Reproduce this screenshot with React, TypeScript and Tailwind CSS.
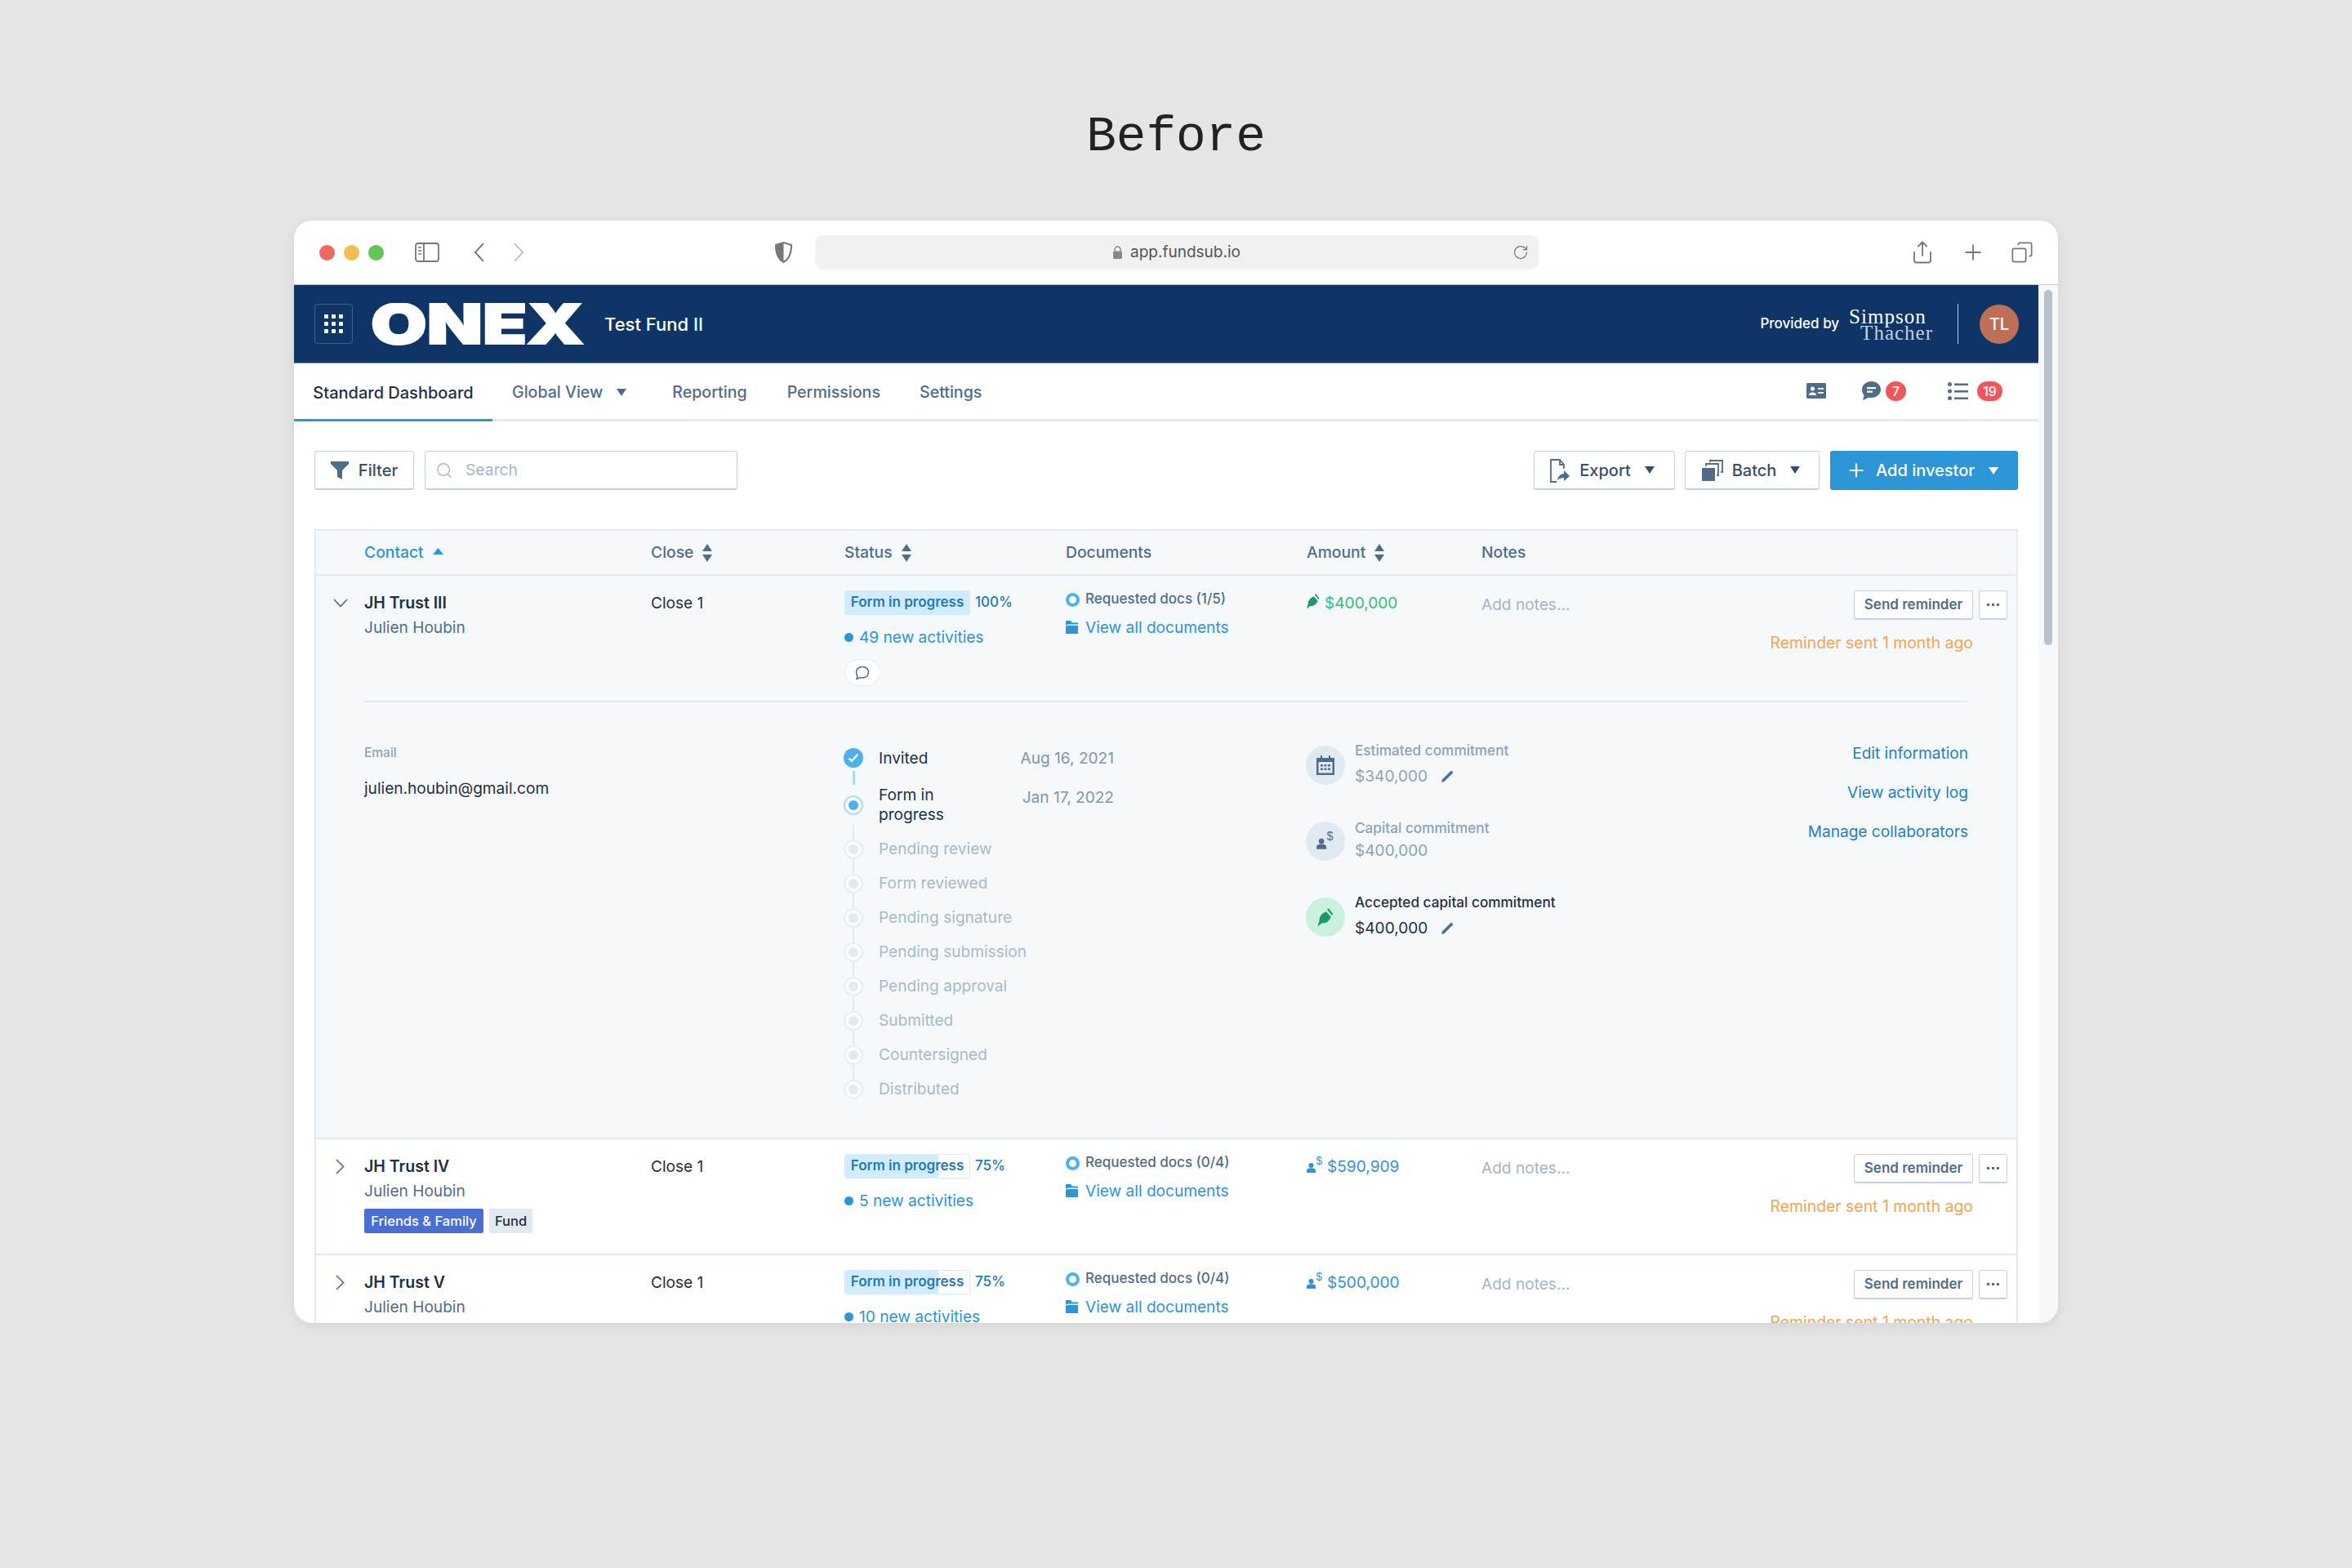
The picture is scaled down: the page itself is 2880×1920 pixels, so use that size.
import React from "react";
import { Copy, Plus, RotateCw, Search, Share } from "lucide-react";

const gridCols = "grid grid-cols-[59px_351px_237px_271px_295px_214px_1fr]";

function Caret({ className = "" }: { className?: string }) {
  return (
    <svg width="12" height="9" viewBox="0 0 12 9" className={className}>
      <path d="M0 0h12L6 9z" fill="currentColor" />
    </svg>
  );
}

function SortIcon() {
  return (
    <svg width="12" height="22" viewBox="0 0 12 22" className="text-[#4f6d8a]">
      <path d="M6 0l6 9H0zM0 13h12l-6 9z" fill="currentColor" />
    </svg>
  );
}

function PersonDollar({ className = "", size = 22 }: { className?: string; size?: number }) {
  return (
    <svg width={size} height={size} viewBox="0 0 22 22" className={className}>
      <circle cx="6.500" cy="11" r="3" fill="currentColor" />
      <path d="M1 20v-2.500c0-2 2-3.200 5.500-3.200s5.500 1.200 5.500 3.200V20z" fill="currentColor" />
      <text x="12" y="10" fontSize="13" fill="currentColor" fontFamily="Inter, sans-serif">$</text>
    </svg>
  );
}

function Nib({ className = "", size = 20 }: { className?: string; size?: number }) {
  return (
    <svg width={size} height={size} viewBox="0 0 20 20" className={className}>
      <path d="M11 4.500C6.500 5.500 3.500 9.500 3.800 13.500L2 19.500l4.500-3.500c4.500.3 8-2.200 9-6.500z" fill="currentColor" />
      <path d="M12.500 1.500l4.500 6" stroke="currentColor" strokeWidth="1.800" />
    </svg>
  );
}

function Pencil() {
  return (
    <svg width="17" height="17" viewBox="0 0 17 17" className="text-[#4f6d8a]">
      <path d="M1 16l1-3.500L13 1.500l2.500 2.500L4.500 15z" fill="currentColor" />
    </svg>
  );
}

function Folder() {
  return (
    <svg width="15" height="16" viewBox="0 0 15 16" className="text-[#2b95d6]">
      <path d="M0 0h6l2 2.500h7V4.500H3L0 6zM2 6h13v10H0V7z" fill="currentColor" />
    </svg>
  );
}

function Calendar() {
  return (
    <svg width="22" height="24" viewBox="0 0 22 24" className="text-[#4f6d8a]">
      <path d="M5 0h2v3h8V0h2v3h5v21H0V3h5z" fill="currentColor" />
      <rect x="2.500" y="8" width="17" height="13.500" fill="#e1eaf1" />
      <path d="M5 11h3v2.500H5zM9.500 11h3v2.500h-3zM14 11h3v2.500h-3zM5 15.500h3V18H5zM9.500 15.500h3V18h-3zM14 15.500h3V18h-3z" fill="currentColor" />
    </svg>
  );
}

function HeaderCell({ label, active, sort }: { label: string; active?: boolean; sort?: boolean }) {
  return (
    <div className={`flex items-center gap-[11px] text-[19.300px] font-medium ${active ? "text-[#2b95d6]" : "text-[#4f6d8a]"}`}>
      <span>{label}</span>
      {sort && <SortIcon />}
      {active && (
        <svg width="13" height="8" viewBox="0 0 13 8" className="mb-1">
          <path d="M6.500 0L13 8H0z" fill="currentColor" />
        </svg>
      )}
    </div>
  );
}

function StatusBadge({ progress }: { progress: number }) {
  return (
    <div className="flex items-center gap-[6px]">
      <span
        className={
          progress === 100
            ? "flex h-[30px] w-[154px] items-center justify-center rounded-[3px] bg-[#d1ecff] text-[17px] font-semibold text-[#1f7ab8]"
            : "flex h-[30px] w-[154px] items-center justify-center rounded-[3px] border border-[#d1ecff] bg-[linear-gradient(90deg,#d1ecff_75%,#ffffff_75%)] text-[17px] font-semibold text-[#1f7ab8]"
        }
      >
        Form in progress
      </span>
      <span className="text-[17px] font-medium text-[#1f7ab8]">{progress}%</span>
    </div>
  );
}

function InvestorRow({
  name,
  tags,
  progress,
  activities,
  docs,
  amount,
  open,
  comment,
}: {
  name: string;
  tags?: boolean;
  progress: number;
  activities: number;
  docs: string;
  amount: string;
  open?: boolean;
  comment?: boolean;
}) {
  return (
    <div className={`${gridCols} ${open ? "h-[153px]" : "h-[140px]"}`}>
      <div className="flex h-[43px] items-end justify-center text-[#4f6d8a]">
        {open ? (
          <svg width="18" height="11" viewBox="0 0 18 11" fill="none" stroke="currentColor" strokeWidth="1.600" className="mb-[4px]">
            <path d="M1 1l8 8.500L17 1" />
          </svg>
        ) : (
          <svg width="11" height="19" viewBox="0 0 11 19" fill="none" stroke="currentColor" strokeWidth="1.600">
            <path d="M1 1l8.500 8.500L1 18" />
          </svg>
        )}
      </div>
      <div className="pt-[19px]">
        <div className="h-6 text-[19.500px] font-semibold text-[#1f3044]">{name}</div>
        <div className="mt-[6px] h-6 text-[#4f6d8a]">Julien Houbin</div>
        {tags && (
          <div className="mt-[12px] flex gap-[7px] text-[16.500px] font-medium">
            <span className="flex h-[30px] w-[146px] items-center justify-center rounded-[2px] bg-[#4a6fd4] text-white">Friends &amp; Family</span>
            <span className="flex h-[30px] w-[53px] items-center justify-center rounded-[2px] bg-[#e1eaf1] text-[#1f3044]">Fund</span>
          </div>
        )}
      </div>
      <div className="pt-[19px] text-[#1f3044]">Close 1</div>
      <div className="pt-[18px]">
        <StatusBadge progress={progress} />
        <div className="mt-[15px] flex h-6 items-center gap-[7px] text-[#2b95d6]">
          <span className="size-[11px] rounded-full bg-[#2b95d6]" />
          <span>{activities} new activities</span>
        </div>
        {comment && (
          <div className="mt-[15px] flex h-[33px] w-[44px] items-center justify-center rounded-full border border-[#e1eaf1] bg-white text-[#4f6d8a]">
            <svg width="20" height="20" viewBox="0 0 20 20" fill="none" stroke="currentColor" strokeWidth="1.500">
              <path d="M10 2.500c4.500 0 7.500 2.900 7.500 6.700s-3 6.800-7.500 6.800c-1 0-2-.1-2.800-.4L3 17.500l1-3.800C3 12.500 2.500 11 2.500 9.200 2.500 5.400 5.500 2.500 10 2.500z" />
            </svg>
          </div>
        )}
      </div>
      <div className="pt-[19px]">
        <div className="flex h-5 items-center gap-[7px] text-[17px] font-medium text-[#4f6d8a]">
          <span className="size-[17px] rounded-full border-[4px] border-[#4db0ef] bg-white" />
          <span>Requested docs ({docs})</span>
        </div>
        <div className="mt-[12px] flex h-6 items-center gap-[9px] text-[#2b95d6]">
          <Folder />
          <span>View all documents</span>
        </div>
      </div>
      <div className={`flex h-[43px] items-end gap-[4px] ${open ? "text-[#2fbf7f]" : "text-[#2b95d6]"}`}>
        {open ? <Nib className="-ml-[2px] mb-[2px] text-[#1d9a63]" /> : <PersonDollar className="-ml-[1px]" />}
        <span className="h-6">{amount}</span>
      </div>
      <div className="flex justify-between pr-[11px]">
        <div className="pt-[21px] text-[#a4b5c6]">Add notes...</div>
        <div className="flex flex-col items-end pt-[18px]">
          <div className="flex gap-[7px]">
            <button className="h-[36px] w-[146px] rounded-[3px] border border-[#c3d2de] border-b-2 bg-white text-[17px] font-semibold text-[#4f6d8a]">Send reminder</button>
            <button className="flex h-[36px] w-[35px] items-center justify-center rounded-[3px] border border-[#c3d2de] border-b-2 bg-white text-[#4f6d8a]">
              <svg width="15" height="4" viewBox="0 0 15 4"><path d="M0 0h3v3H0zM6 0h3v3H6zM12 0h3v3h-3z" fill="currentColor" /></svg>
            </button>
          </div>
          <div className="mt-[14px] mr-[42px] h-6 text-[19.400px] text-[#f6a351]">Reminder sent 1 month ago</div>
        </div>
      </div>
    </div>
  );
}

function PendingStep({ label, last }: { label: string; last?: boolean }) {
  return (
    <div className="flex h-[42px] gap-[19px]">
      <div className="flex w-6 flex-col items-center">
        <span className="flex size-6 shrink-0 items-center justify-center rounded-full border-2 border-[#e6eef5] bg-[#fafcfe]">
          <span className="size-3 rounded-full bg-[#e1eaf1]" />
        </span>
        {!last && <span className="h-[18px] w-[2px] bg-[#e1eaf1]" />}
      </div>
      <div className="-mt-px h-6 leading-6 text-[#a9b9c8]">{label}</div>
    </div>
  );
}

function Timeline() {
  return (
    <div className="w-[331px] leading-6">
      <div className="flex h-[58px] gap-[19px]">
        <div className="flex w-6 flex-col items-center">
          <span className="flex size-6 shrink-0 items-center justify-center rounded-full bg-[#4db0ef] text-white">
            <svg width="14" height="12" viewBox="0 0 14 12" fill="none" stroke="currentColor" strokeWidth="2.200"><path d="M1.500 6.500l3.500 3.500 7.500-8.500" /></svg>
          </span>
          <span className="mt-[4px] h-[17px] w-[3px] bg-[#a8dcfb]" />
        </div>
        <div className="flex h-6 flex-1 justify-between">
          <span className="text-[#1f3044]">Invited</span>
          <span className="text-[#7f95aa]">Aug 16, 2021</span>
        </div>
      </div>
      <div className="flex h-[54px] gap-[19px]">
        <div className="flex w-6 flex-col items-center">
          <span className="flex size-6 shrink-0 items-center justify-center rounded-full border-2 border-[#a8dcfb] bg-white">
            <span className="size-3 rounded-full bg-[#4db0ef]" />
          </span>
          <span className="mt-[12px] h-[18px] w-[2px] bg-[#e1eaf1]" />
        </div>
        <div className="-mt-[13px] flex flex-1 justify-between">
          <span className="w-[100px] text-[#1f3044]">Form in progress</span>
          <span className="mt-[3px] text-[#7f95aa]">Jan 17, 2022</span>
        </div>
      </div>
      <PendingStep label="Pending review" />
      <PendingStep label="Form reviewed" />
      <PendingStep label="Pending signature" />
      <PendingStep label="Pending submission" />
      <PendingStep label="Pending approval" />
      <PendingStep label="Submitted" />
      <PendingStep label="Countersigned" />
      <PendingStep label="Distributed" last />
    </div>
  );
}

function Commitment({
  icon,
  label,
  value,
  edit,
  accepted,
  gap,
}: {
  icon: React.ReactNode;
  label: string;
  value: string;
  edit?: boolean;
  accepted?: boolean;
  gap: string;
}) {
  return (
    <div className="flex h-12 items-center gap-3">
      <div className={`flex size-12 items-center justify-center rounded-full ${accepted ? "bg-[#c9f1dd]" : "bg-[#e1eaf1]"}`}>{icon}</div>
      <div className="mb-[3px]">
        <div className={`h-5 text-[17.200px] leading-5 font-medium ${accepted ? "text-[#1f3044]" : "text-[#8ea2b5]"}`}>{label}</div>
        <div className={`flex h-6 items-center gap-4 ${gap} ${accepted ? "text-[#1f3044]" : "text-[#8ea2b5]"}`}>
          <span>{value}</span>
          {edit && <Pencil />}
        </div>
      </div>
    </div>
  );
}

function ExpandedPanel() {
  return (
    <div className="grid h-[533px] grid-cols-[59px_587px_566px_1fr] pt-[50px]">
      <div />
      <div className="mt-[2px]">
        <div className="h-5 text-[15.500px] leading-5 font-medium text-[#8ea2b5]">Email</div>
        <div className="mt-[19px] h-6 text-[#1f3044]">julien.houbin@gmail.com</div>
      </div>
      <div className="mt-[6px]">
        <Timeline />
      </div>
      <div className="mt-[3px] flex justify-between pr-[59px]">
        <div className="flex flex-col gap-[45px]">
          <Commitment gap="mt-[9px]" icon={<Calendar />} label="Estimated commitment" value="$340,000" edit />
          <Commitment gap="mt-[6px]" icon={<PersonDollar className="text-[#4f6d8a]" size={24} />} label="Capital commitment" value="$400,000" />
          <Commitment gap="mt-[9px]" icon={<Nib className="text-[#1d9a63]" size={24} />} label="Accepted capital commitment" value="$400,000" edit accepted />
        </div>
        <div className="-mt-[3px] flex flex-col items-end gap-[24px] leading-6 text-[#2480bd]">
          <span>Edit information</span>
          <span>View activity log</span>
          <span>Manage collaborators</span>
        </div>
      </div>
    </div>
  );
}

function BrowserBar() {
  return (
    <div className="flex h-[79px] items-center border-b border-[#c4cbd3] pr-[30px] pl-[31px] text-[#777]">
      <div className="flex gap-[11px]">
        <span className="size-[19px] rounded-full bg-[#f2685e]" />
        <span className="size-[19px] rounded-full bg-[#f5bd4f]" />
        <span className="size-[19px] rounded-full bg-[#62c655]" />
      </div>
      <svg width="30" height="24" viewBox="0 0 30 24" fill="none" stroke="currentColor" strokeWidth="1.800" className="ml-[38px]">
        <rect x="1" y="1" width="28" height="22" rx="3" />
        <path d="M11 1v22" />
        <path d="M4 6h4M4 10h4M4 14h4" strokeWidth="1.400" />
      </svg>
      <svg width="13" height="24" viewBox="0 0 13 24" fill="none" stroke="#666" strokeWidth="1.800" className="ml-[42px]">
        <path d="M12 1L2 12l10 11" />
      </svg>
      <svg width="13" height="24" viewBox="0 0 13 24" fill="none" stroke="#bbb" strokeWidth="1.800" className="ml-[36px]">
        <path d="M1 1l10 11L1 23" />
      </svg>
      <svg width="21" height="26" viewBox="0 0 21 26" className="ml-[307px]">
        <path d="M10.500 1L20 4c0 10-2 17-9.500 21C3 21 1 14 1 4z" fill="none" stroke="#777" strokeWidth="2" />
        <path d="M10.500 1L1 4c0 10 2 17 9.500 21z" fill="#777" />
      </svg>
      <div className="ml-[28px] flex h-[42px] w-[886px] items-center rounded-[10px] bg-[#f1f1f1] pr-[12px] pl-[365px]">
        <svg width="11" height="16" viewBox="0 0 11 16" className="mr-[10px]">
          <path d="M2 7V4.500a3.500 3.500 0 017 0V7" fill="none" stroke="#888" strokeWidth="1.500" />
          <rect y="6.500" width="11" height="9.500" rx="1.500" fill="#888" />
        </svg>
        <span className="text-[19px] text-[#555]">app.fundsub.io</span>
        <RotateCw size={20} strokeWidth={1.500} className="ml-auto text-[#777]" />
      </div>
      <Share size={30} strokeWidth={1.500} className="ml-auto" />
      <Plus size={30} strokeWidth={1.500} className="ml-[32px]" />
      <Copy size={28} strokeWidth={1.500} className="ml-[31px] -scale-x-100" />
    </div>
  );
}

function FundHeader() {
  return (
    <div className="flex h-[96px] items-center border-b border-[#6f8fb0] bg-[#0f3566] pr-[24px] pl-[25px] text-white">
      <div className="flex h-[49px] w-[47px] items-center justify-center rounded-[4px] border border-[#3d6289]">
        <div className="grid grid-cols-3 gap-[4px]">
          {Array.from({ length: 9 }).map((_, i) => (
            <span key={i} className="size-[5px] rounded-[1px] bg-white" />
          ))}
        </div>
      </div>
      <svg width="262" height="52" viewBox="0 0 262 52" className="ml-[22px]">
        <text x="0" y="50" fontFamily="Inter, sans-serif" fontWeight="900" fontSize="68" textLength="261" lengthAdjust="spacingAndGlyphs" fill="#fff" stroke="#fff" strokeWidth="2">ONEX</text>
      </svg>
      <span className="mt-[2px] ml-[24px] text-[22px] font-medium">Test Fund II</span>
      <span className="ml-auto text-[17px] font-medium">Provided by</span>
      <div className="mt-[2px] ml-[12px] flex flex-col font-['Liberation_Serif',serif] text-[25px] leading-[20px] tracking-[1px]">
        <span>Simpson</span>
        <span className="ml-[14px] text-[#c5cfdb]">Thacher</span>
      </div>
      <span className="ml-[30px] h-[49px] w-px bg-[#c5cfdb]" />
      <span className="ml-[26px] flex size-12 items-center justify-center rounded-full bg-[#bf6f55] text-[20px] font-medium">TL</span>
    </div>
  );
}

function TabBar() {
  return (
    <div className="flex h-[71px] border-b-[3px] border-[#e1eaf1] pt-[3px] text-[19.600px] text-[#4f6d8a]">
      <div className="-mt-[3px] -mb-[3px] flex w-[243px] items-center justify-center border-b-[3px] border-[#2b95d6] pt-[3px] text-[20px] font-medium text-[#1f3044]">Standard Dashboard</div>
      <div className="ml-[24px] flex items-center gap-[17px] font-medium">
        <span>Global View</span>
        <Caret />
      </div>
      <div className="ml-[56px] flex items-center font-medium">Reporting</div>
      <div className="ml-[49px] flex items-center font-medium">Permissions</div>
      <div className="ml-[48px] flex items-center font-medium">Settings</div>
      <div className="mr-[44px] ml-auto flex -translate-y-[2px] items-center">
        <svg width="24" height="19" viewBox="0 0 24 19">
          <rect width="24" height="19" rx="1.500" fill="#4f6d8a" />
          <circle cx="7.500" cy="7" r="2.500" fill="#fff" />
          <path d="M3 15c0-2.500 2-3.500 4.500-3.500S12 12.500 12 15zM14 6h7v1.800h-7zM14 11h7v1.800h-7z" fill="#fff" />
        </svg>
        <svg width="25" height="25" viewBox="0 0 25 25" className="ml-[43px]">
          <path d="M12.500 1C19 1 24 5.500 24 11s-5 10-11.500 10c-1 0-2-.1-3-.3L2 24l1.500-6C2 16 1 13.500 1 11 1 5.500 6 1 12.500 1z" fill="#4f6d8a" />
          <path d="M7 8h11v2.200H7zM7 12.500h7v2.200H7z" fill="#fff" />
        </svg>
        <span className="ml-[5px] flex h-6 w-[25px] items-center justify-center rounded-full bg-[#f2555a] text-[16px] font-medium text-white">7</span>
        <svg width="25" height="22" viewBox="0 0 25 22" className="ml-[51px]" fill="#4f6d8a">
          <circle cx="2.500" cy="2.500" r="2.500" />
          <circle cx="2.500" cy="11" r="2.500" />
          <circle cx="2.500" cy="19.500" r="2.500" />
          <path d="M8 1.500h17v2.400H8zM8 10h17v2.400H8zM8 18.500h17v2.400H8z" />
        </svg>
        <span className="ml-[11px] flex h-6 w-[31px] items-center justify-center rounded-full bg-[#f2555a] text-[16px] font-medium text-white">19</span>
      </div>
    </div>
  );
}

function ActionBar() {
  return (
    <div className="mt-[36px] flex h-12 px-[25px] text-[20px] font-medium text-[#4f6d8a]">
      <button className="flex w-[122px] items-center justify-center gap-[12px] rounded-[3px] border border-[#c3d2de] border-b-2 bg-white text-[#34506c]">
        <svg width="22" height="22" viewBox="0 0 22 22"><path d="M0 0h22v3l-8 8v11l-6-3v-8L0 3z" fill="#4f6d8a" /></svg>
        Filter
      </button>
      <div className="ml-[13px] flex w-[383px] items-center gap-[15px] rounded-[3px] border border-[#c3d2de] border-b-2 bg-white px-[12px] text-[19.300px] font-normal text-[#a4b5c6]">
        <Search size={22} strokeWidth={1.500} />
        Search
      </div>
      <button className="ml-auto flex w-[173px] items-center justify-center gap-[11px] rounded-[3px] border border-[#c3d2de] border-b-2 bg-white pr-[6px] text-[#34506c]">
        <svg width="26" height="30" viewBox="0 0 26 30" fill="none" stroke="#4f6d8a" strokeWidth="1.800">
          <path d="M9 29H2V2h11l5 6v5" />
          <path d="M13 2v6h5" />
          <path d="M10 27c1-5 4-8 8-8v-4l7 7-7 6v-4c-3 0-6 1-8 3z" fill="#4f6d8a" stroke="none" />
        </svg>
        Export
        <Caret className="ml-[6px]" />
      </button>
      <button className="ml-[12px] flex w-[165px] items-center justify-center gap-[11px] rounded-[3px] border border-[#c3d2de] border-b-2 bg-white pr-[3px] text-[#34506c]">
        <svg width="26" height="26" viewBox="0 0 26 26">
          <rect y="10" width="16" height="16" fill="#4f6d8a" />
          <path d="M5 8V5h15v14h-2M10 3V1h15v14h-2" fill="none" stroke="#4f6d8a" strokeWidth="1.800" />
        </svg>
        Batch
        <Caret className="ml-[6px]" />
      </button>
      <button className="ml-[13px] flex w-[230px] items-center justify-center gap-[11px] rounded-[3px] bg-[#2b95d6] pr-[5px] text-white">
        <Plus size={26} strokeWidth={2} />
        Add investor
        <Caret className="ml-[6px]" />
      </button>
    </div>
  );
}

export default function App() {
  return (
    <div className="flex min-h-[1920px] flex-col items-center bg-[#e5e5e5] font-['Inter',sans-serif] text-[19.100px]">
      <h1 className="mt-[128px] mb-[62px] h-[80px] font-['Liberation_Mono',monospace] text-[61px] leading-[80px] text-[#222]">Before</h1>
      <div className="flex h-[1350px] w-[2160px] flex-col overflow-hidden rounded-[22px] bg-white shadow-[0_4px_14px_rgba(0,0,0,0.08)]">
        <BrowserBar />
        <div className="flex min-h-0 flex-1">
          <main className="w-[2136px]">
            <FundHeader />
            <TabBar />
            <ActionBar />
            <section className="mx-[25px] mt-[48px] border-x-2 border-[#e1eaf1]">
              <div className={`${gridCols} h-[57px] items-center border-y-2 border-[#e1eaf1] bg-[#f5f9fc]`}>
                <div />
                <HeaderCell label="Contact" active />
                <HeaderCell label="Close" sort />
                <HeaderCell label="Status" sort />
                <HeaderCell label="Documents" />
                <HeaderCell label="Amount" sort />
                <HeaderCell label="Notes" />
              </div>
              <div className="border-b-2 border-[#e1eaf1] bg-[#f5f9fc]">
                <InvestorRow name="JH Trust III" progress={100} activities={49} docs="1/5" amount="$400,000" open comment />
                <div className="mx-[59px] h-[2px] bg-[#e1eaf1]" />
                <ExpandedPanel />
              </div>
              <div className="border-b-2 border-[#e1eaf1]">
                <InvestorRow name="JH Trust IV" tags progress={75} activities={5} docs="0/4" amount="$590,909" />
              </div>
              <InvestorRow name="JH Trust V" progress={75} activities={10} docs="0/4" amount="$500,000" />
            </section>
          </main>
          <aside className="flex w-[24px] justify-center bg-[#f6f8fa] pt-[6px]">
            <div className="h-[435px] w-[10px] rounded-full bg-[#b6c2cc]" />
          </aside>
        </div>
      </div>
    </div>
  );
}
